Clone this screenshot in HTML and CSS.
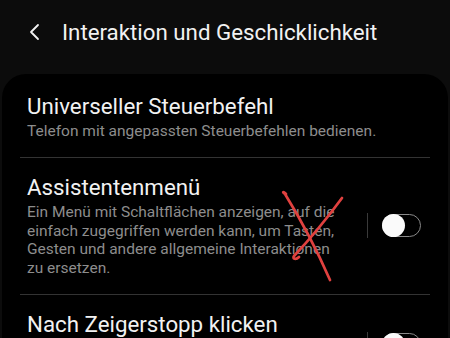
FILE: index.html
```html
<!DOCTYPE html>
<html lang="de">
<head>
<meta charset="utf-8">
<link rel="stylesheet" href="styles.css">
</head>
<body>
<header class="top">
  <svg class="back" width="14" height="18" viewBox="0 0 14 18"><path d="M10 2 L3 9 L10 16" fill="none" stroke="#f2f2f2" stroke-width="1.8" stroke-linecap="round" stroke-linejoin="round"/></svg>
  <h1 class="title">Interaktion und Geschicklichkeit</h1>
</header>
<main class="card">
  <div class="item">
    <div class="text">
      <div class="name">Universeller Steuerbefehl</div>
      <div class="desc">Telefon mit angepassten Steuerbefehlen bedienen.</div>
    </div>
  </div>
  <div class="sep"></div>
  <div class="item">
    <div class="text">
      <div class="name">Assistentenmenü</div>
      <div class="desc wrap">Ein Menü mit Schaltflächen anzeigen, auf die einfach zugegriffen werden kann, um Tasten, Gesten und andere allgemeine Interaktionen zu ersetzen.</div>
    </div>
    <div class="ctrl"><span class="vline"></span><span class="switch"><span class="knob"></span></span></div>
    <svg class="scribble" width="72" height="95" viewBox="0 0 72 95"><path d="M8 4 C 5 1, 4 2, 7 4 C 20 25, 38 58, 52 90" fill="none" stroke="#e0413f" stroke-width="2.7" stroke-linecap="round"/><path d="M64 8 C 50 27, 33 48, 16 66 C 14 69, 18 70, 21 67" fill="none" stroke="#e0413f" stroke-width="2.7" stroke-linecap="round"/></svg>
  </div>
  <div class="sep"></div>
  <div class="item last">
    <div class="text">
      <div class="name">Nach Zeigerstopp klicken</div>
    </div>
    <div class="ctrl low"><span class="vline"></span><span class="switch"><span class="knob"></span></span></div>
  </div>
</main>
</body>
</html>
```
FILE: styles.css
```css
html, body { margin: 0; padding: 0; }
body {
  background: #0c0c0c;
  width: 450px;
  height: 338px;
  overflow: hidden;
  font-family: Roboto, "Noto Sans", sans-serif;
  color: #f2f2f2;
}
.top {
  display: flex;
  align-items: center;
  height: 74px;
  padding-left: 28px;
  box-sizing: border-box;
  padding-bottom: 10px;
}
.back { margin-right: 20px; }
.title {
  margin: 0;
  font-size: 22.3px;
  font-weight: 400;
}
.card {
  background: #000;
  border-radius: 24px 24px 0 0;
  margin: 0 2px;
  height: 264px;
  padding: 3px 18px 0;
  box-sizing: border-box;
  overflow: hidden;
}
.item {
  position: relative;
  display: flex;
  align-items: center;
  padding: 16px 9px 17px 7px;
}
.text { flex: 1; }
.name { font-size: 22.3px; line-height: 26px; white-space: nowrap; }
.desc { font-size: 15.5px; line-height: 18.4px; color: #8d8d8d; margin-top: 3px; white-space: nowrap; }
.wrap { white-space: normal; max-width: 318px; }
.sep { height: 1px; background: #333; }
.ctrl { display: flex; align-items: center; gap: 14px; }
.vline { width: 1px; height: 25px; background: #3a3a3a; }
.switch {
  position: relative;
  width: 39px; height: 23px;
  border: 1.5px solid #8a8a8a;
  border-radius: 12px;
  box-sizing: border-box;
}
.knob {
  position: absolute;
  left: -1.5px; top: -1.5px;
  width: 23px; height: 23px;
  border-radius: 50%;
  background: #fafafa;
}
.scribble { position: absolute; left: 258px; top: 32px; }
.last { align-items: flex-start; }
.low { margin-top: 21px; }
```
